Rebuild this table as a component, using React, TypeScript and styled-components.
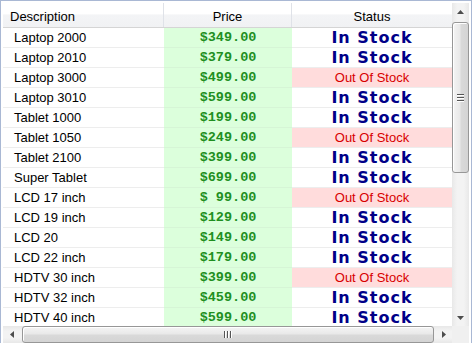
import { FC } from "react";
import styled, { createGlobalStyle } from "styled-components";

interface IProduct {
  id: number;
  name: string;
  price: string;
  inStock: boolean;
}

const PRODUCTS: IProduct[] = [
  { id: 1, name: "Laptop 2000", price: "$349.00", inStock: true },
  { id: 2, name: "Laptop 2010", price: "$379.00", inStock: true },
  { id: 3, name: "Laptop 3000", price: "$499.00", inStock: false },
  { id: 4, name: "Laptop 3010", price: "$599.00", inStock: true },
  { id: 5, name: "Tablet 1000", price: "$199.00", inStock: true },
  { id: 6, name: "Tablet 1050", price: "$249.00", inStock: false },
  { id: 7, name: "Tablet 2100", price: "$399.00", inStock: true },
  { id: 8, name: "Super Tablet", price: "$699.00", inStock: true },
  { id: 9, name: "LCD 17 inch", price: "$ 99.00", inStock: false },
  { id: 10, name: "LCD 19 inch", price: "$129.00", inStock: true },
  { id: 11, name: "LCD 20", price: "$149.00", inStock: true },
  { id: 12, name: "LCD 22 inch", price: "$179.00", inStock: true },
  { id: 13, name: "HDTV 30 inch", price: "$399.00", inStock: false },
  { id: 14, name: "HDTV 32 inch", price: "$459.00", inStock: true },
  { id: 15, name: "HDTV 40 inch", price: "$599.00", inStock: true },
];

const GlobalStyle = createGlobalStyle`
  html, body {
    margin: 0;
    padding: 0;
    background: #ffffff;
    overflow: hidden;
  }
  body {
    font-family: "Liberation Sans", Arial, sans-serif;
  }
`;

const StyledFrame = styled.div`
  width: 472px;
  height: 346px;
  box-sizing: border-box;
  border: 1px solid #a9b8d4;
  padding: 2px;
  background: #ffffff;
  display: grid;
  grid-template-columns: 449px 17px;
  grid-template-rows: 323px 17px;
`;

const StyledViewport = styled.div`
  overflow: hidden;
  display: flex;
  flex-direction: column;
`;

const StyledHeader = styled.div`
  display: grid;
  grid-template-columns: 161px 128px 160px;
  height: 25px;
  flex-shrink: 0;
  box-sizing: border-box;
  border-bottom: 1px solid #d5d5d5;
  background: linear-gradient(#ffffff 0%, #ffffff 45%, #f3f4f6 50%, #f1f2f4 100%);
`;

const StyledHeaderCell = styled.div<{ $align?: "left" | "center" }>`
  display: flex;
  align-items: center;
  justify-content: ${({ $align }) => ($align === "left" ? "flex-start" : "center")};
  padding-left: ${({ $align }) => ($align === "left" ? "7px" : "0")};
  border-right: 1px solid #dfe2e8;
  font-size: 13px;
  color: #000000;
  padding-top: 3px;
  &:last-child {
    border-right: none;
  }
`;

const StyledRow = styled.div`
  display: grid;
  grid-template-columns: 161px 128px 160px;
  height: 20px;
  flex-shrink: 0;
`;

const StyledCell = styled.div`
  display: flex;
  align-items: center;
  box-sizing: border-box;
  border-bottom: 1px solid #ededed;
`;

const StyledNameCell = styled(StyledCell)`
  padding-left: 11px;
  font-size: 13px;
  color: #000000;
`;

const StyledPriceCell = styled(StyledCell)`
  justify-content: center;
  background: #dcffdc;
  border-bottom-color: #d6f5d6;
  font-family: "Liberation Mono", "Courier New", monospace;
  font-weight: bold;
  font-size: 13.5px;
  color: #1f8f1f;
  white-space: pre;
`;

const StyledStatusCell = styled(StyledCell)<{ $inStock: boolean }>`
  justify-content: center;
  background: ${({ $inStock }) => ($inStock ? "#ffffff" : "#ffdcdc")};
  font-family: ${({ $inStock }) =>
    $inStock ? `"DejaVu Sans", Verdana, sans-serif` : `"Liberation Sans", Arial, sans-serif`};
  font-weight: ${({ $inStock }) => ($inStock ? "bold" : "normal")};
  font-size: ${({ $inStock }) => ($inStock ? "16px" : "13px")};
  letter-spacing: ${({ $inStock }) => ($inStock ? "1px" : "0")};
  color: ${({ $inStock }) => ($inStock ? "#000088" : "#d80000")};
`;

const StyledVScroll = styled.div`
  display: flex;
  flex-direction: column;
  background: linear-gradient(to right, #e8e8e8, #f3f3f3 30%, #f3f3f3 70%, #e8e8e8);
`;

const StyledHScroll = styled.div`
  display: flex;
  background: linear-gradient(#e8e8e8, #f3f3f3 30%, #f3f3f3 70%, #e8e8e8);
`;

const StyledCorner = styled.div`
  background: #f0f0f0;
`;

const StyledArrowButton = styled.div`
  width: 17px;
  height: 17px;
  flex-shrink: 0;
  display: flex;
  align-items: center;
  justify-content: center;
`;

const StyledTrack = styled.div<{ $vertical?: boolean }>`
  flex: 1;
  display: flex;
  flex-direction: ${({ $vertical }) => ($vertical ? "column" : "row")};
  padding: ${({ $vertical }) => ($vertical ? "2px 0" : "0 1px 0 2px")};
`;

const StyledThumb = styled.div<{ $vertical?: boolean }>`
  box-sizing: border-box;
  border: 1px solid #979797;
  border-radius: 3px;
  display: flex;
  align-items: center;
  justify-content: center;
  gap: 1px;
  flex-direction: ${({ $vertical }) => ($vertical ? "column" : "row")};
  background: ${({ $vertical }) =>
    $vertical
      ? "linear-gradient(to right, #f4f4f4, #e9e9e9 45%, #d9d9d9 55%, #d4d4d4)"
      : "linear-gradient(#f4f4f4, #e9e9e9 45%, #d9d9d9 55%, #d4d4d4)"};
  box-shadow: inset 1px 1px 0 #ffffff;
`;

const StyledGripLine = styled.span<{ $vertical?: boolean }>`
  display: block;
  width: ${({ $vertical }) => ($vertical ? "7px" : "1px")};
  height: ${({ $vertical }) => ($vertical ? "1px" : "7px")};
  background: #555555;
  box-shadow: ${({ $vertical }) => ($vertical ? "0 1px 0 #ffffff" : "1px 0 0 #ffffff")};
  margin: ${({ $vertical }) => ($vertical ? "0 0 1px" : "0 1px 0 0")};
`;

const Arrow: FC<{ dir: "up" | "down" | "left" | "right" }> = ({ dir }) => {
  const points = {
    up: "0,4 7,4 3.5,0",
    down: "0,0 7,0 3.5,4",
    left: "4,0 4,7 0,3.5",
    right: "0,0 0,7 4,3.5",
  }[dir];
  const horizontal = dir === "left" || dir === "right";
  return (
    <svg width={horizontal ? 4 : 7} height={horizontal ? 7 : 4} viewBox={horizontal ? "0 0 4 7" : "0 0 7 4"}>
      <polygon points={points} fill="#4d4d4d" />
    </svg>
  );
};

const Grip: FC<{ vertical?: boolean }> = ({ vertical }) => (
  <>
    <StyledGripLine $vertical={vertical} />
    <StyledGripLine $vertical={vertical} />
    <StyledGripLine $vertical={vertical} />
  </>
);

export default function App(): JSX.Element {
  return (
    <>
      <GlobalStyle />
      <StyledFrame>
        <StyledViewport>
          <StyledHeader>
            <StyledHeaderCell $align="left">Description</StyledHeaderCell>
            <StyledHeaderCell>Price</StyledHeaderCell>
            <StyledHeaderCell>Status</StyledHeaderCell>
          </StyledHeader>
          {PRODUCTS.map((product) => (
            <StyledRow key={product.id}>
              <StyledNameCell>{product.name}</StyledNameCell>
              <StyledPriceCell>{product.price}</StyledPriceCell>
              <StyledStatusCell $inStock={product.inStock}>
                {product.inStock ? "In Stock" : "Out Of Stock"}
              </StyledStatusCell>
            </StyledRow>
          ))}
        </StyledViewport>
        <StyledVScroll>
          <StyledArrowButton>
            <Arrow dir="up" />
          </StyledArrowButton>
          <StyledTrack $vertical>
            <StyledThumb $vertical style={{ height: 151 }}>
              <Grip vertical />
            </StyledThumb>
          </StyledTrack>
          <StyledArrowButton>
            <Arrow dir="down" />
          </StyledArrowButton>
        </StyledVScroll>
        <StyledHScroll>
          <StyledArrowButton>
            <Arrow dir="left" />
          </StyledArrowButton>
          <StyledTrack>
            <StyledThumb style={{ flex: 1 }}>
              <Grip />
            </StyledThumb>
          </StyledTrack>
          <StyledArrowButton>
            <Arrow dir="right" />
          </StyledArrowButton>
        </StyledHScroll>
        <StyledCorner />
      </StyledFrame>
    </>
  );
}
